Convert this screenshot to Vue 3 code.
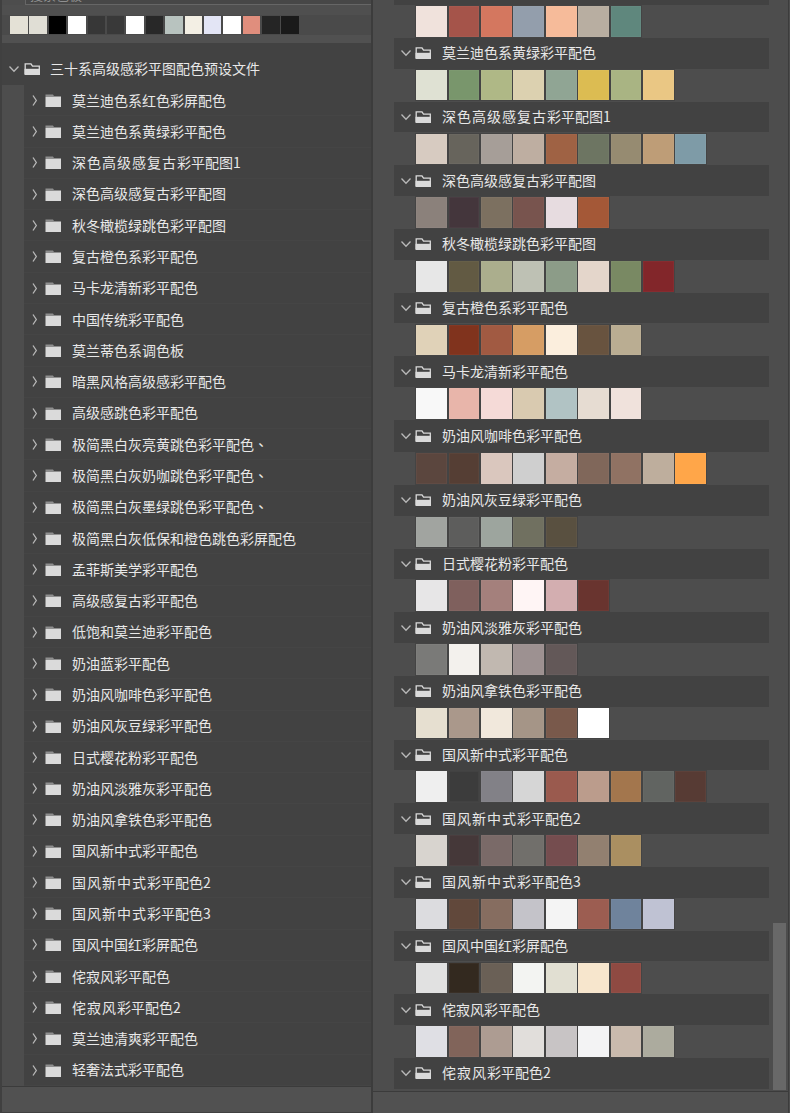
<script setup>
const recent = ['#e4e1d6', '#e0ded5', '#000000', '#ffffff', '#373737', '#393939', '#ffffff', '#282828', '#b8c3bf', '#f3efe4', '#e3e5f5', '#ffffff', '#e08e7d', '#252525', '#1a1a1a']

const folders = [
  '莫兰迪色系红色彩屏配色', '莫兰迪色系黄绿彩平配色', '深色高级感复古彩平配图1', '深色高级感复古彩平配图',
  '秋冬橄榄绿跳色彩平配图', '复古橙色系彩平配色', '马卡龙清新彩平配色', '中国传统彩平配色',
  '莫兰蒂色系调色板', '暗黑风格高级感彩平配色', '高级感跳色彩平配色', '极简黑白灰亮黄跳色彩平配色、',
  '极简黑白灰奶咖跳色彩平配色、', '极简黑白灰墨绿跳色彩平配色、', '极简黑白灰低保和橙色跳色彩屏配色',
  '孟菲斯美学彩平配色', '高级感复古彩平配色', '低饱和莫兰迪彩平配色', '奶油蓝彩平配色', '奶油风咖啡色彩平配色',
  '奶油风灰豆绿彩平配色', '日式樱花粉彩平配色', '奶油风淡雅灰彩平配色', '奶油风拿铁色彩平配色',
  '国风新中式彩平配色', '国风新中式彩平配色2', '国风新中式彩平配色3', '国风中国红彩屏配色',
  '侘寂风彩平配色', '侘寂风彩平配色2', '莫兰迪清爽彩平配色', '轻奢法式彩平配色',
]

const groups = [
  { name: '', colors: ['#f0e2dc', '#a5544a', '#d4775f', '#939eac', '#f6bb9a', '#b8aea1', '#5f877d'] },
  { name: '莫兰迪色系黄绿彩平配色', colors: ['#dfe1d3', '#79966c', '#afb886', '#dcd1b0', '#90a594', '#dcbc52', '#a9b483', '#eac784'] },
  { name: '深色高级感复古彩平配图1', colors: ['#d7cbc1', '#67645c', '#a69e98', '#beaea1', '#9f6244', '#6d7562', '#968b71', '#be9d77', '#7e9ba7'] },
  { name: '深色高级感复古彩平配图', colors: ['#8b817b', '#44363c', '#7c7060', '#78544e', '#e7dce0', '#a45837'] },
  { name: '秋冬橄榄绿跳色彩平配图', colors: ['#e7e7e7', '#625a43', '#abae8d', '#bec1b4', '#8c9c88', '#e4d6cb', '#798963', '#82262a'] },
  { name: '复古橙色系彩平配色', colors: ['#e0d2b8', '#80331d', '#a15a42', '#d69d64', '#fbeedd', '#68533f', '#baad92'] },
  { name: '马卡龙清新彩平配色', colors: ['#f8f8f8', '#e8b5aa', '#f5dad7', '#d9cab0', '#b1c3c4', '#e6dcd2', '#f0e2dc'] },
  { name: '奶油风咖啡色彩平配色', tall: true, colors: ['#5b463e', '#553e34', '#dac7be', '#cfcfcf', '#c5ada1', '#80675a', '#907263', '#beae9d', '#ffa649'] },
  { name: '奶油风灰豆绿彩平配色', colors: ['#a1a4a0', '#5d5d5c', '#9da59e', '#707060', '#595040'] },
  { name: '日式樱花粉彩平配色', colors: ['#e7e6e7', '#7f605d', '#a4807c', '#fff5f5', '#d3aeb0', '#69342f'] },
  { name: '奶油风淡雅灰彩平配色', colors: ['#7a7a78', '#f3f1ed', '#c1b8b0', '#9d9191', '#635858'] },
  { name: '奶油风拿铁色彩平配色', colors: ['#e6dfd0', '#aa988b', '#f1e8dc', '#a59587', '#79594b', '#ffffff'] },
  { name: '国风新中式彩平配色', colors: ['#efefef', '#3c3c3c', '#828187', '#d6d6d6', '#9a5a4e', '#bb9c8c', '#a3764d', '#616461', '#573b34'] },
  { name: '国风新中式彩平配色2', colors: ['#d8d4cf', '#453839', '#7a6a68', '#716f6b', '#754d4f', '#928070', '#aa8f61'] },
  { name: '国风新中式彩平配色3', colors: ['#dcdcdf', '#61483b', '#866d60', '#c4c3c9', '#f4f4f4', '#9c5d51', '#6f839c', '#bfc2d3'] },
  { name: '国风中国红彩屏配色', colors: ['#e1e1e1', '#33291f', '#6a6056', '#f3f4f2', '#e1dfd2', '#f7e6cd', '#8f4a42'] },
  { name: '侘寂风彩平配色', colors: ['#dfdfe4', '#81645a', '#ad9c92', '#e1dedb', '#c8c4c5', '#f3f3f4', '#c9baad', '#acab9e'] },
  { name: '侘寂风彩平配色2', colors: [] },
]

// Names that end in a digit have a slightly wider run before the last characters.
function parts(name) {
  const i = /\d$/.test(name) ? name.indexOf('彩') : 0
  const m = name.slice(i).match(/^(.*?)([\d、]?)$/)
  return [name.slice(0, i), m[1], m[2]]
}
</script>

<template>
  <div class="app">
    <section class="left">
      <div class="search"><div class="field"><span>搜索色板</span></div></div>
      <div class="recent"><i v-for="(c, i) in recent" :key="i" :style="{ background: c }"></i></div>
      <div class="root">
        <svg class="chev" width="12" height="12" viewBox="0 0 12 12"><path d="M1.500 3.500 6 8.300 10.500 3.500" /></svg>
        <svg class="open" width="17" height="14" viewBox="0 0 17 14"><path class="lid" d="M1.200 12V1.800H7L8.500 4.200H15.300V12" /><path class="body" d="M.5 6.800H16V13H.5Z" /></svg>
        <span class="label">三十系高级感彩平图配色预设文件</span>
      </div>
      <div class="tree">
        <div v-for="f in folders" :key="f" class="row">
          <svg class="side" width="8" height="14" viewBox="0 0 8 14"><path d="M2 1.500 5.300 6.500 2 11.500" /></svg>
          <svg class="closed" width="17" height="14" viewBox="0 0 17 14"><path class="tab" d="M.5 .5H8L9 2H.5Z" /><path class="body" d="M.5 2.500H16V13H.5Z" /></svg>
          <span class="label"><b>{{ parts(f)[0] }}</b>{{ parts(f)[1] }}<em>{{ parts(f)[2] }}</em></span>
        </div>
      </div>
      <div class="foot"></div>
    </section>
    <section class="right">
      <div class="view">
        <div class="groups">
          <div v-for="(g, i) in groups" :key="i" class="group">
            <div class="head" :class="{ tall: g.tall }">
              <svg class="chev" width="12" height="12" viewBox="0 0 12 12"><path d="M1.500 3.500 6 8.300 10.500 3.500" /></svg>
              <svg class="open" width="17" height="14" viewBox="0 0 17 14"><path class="lid" d="M1.200 12V1.800H7L8.500 4.200H15.300V12" /><path class="body" d="M.5 6.800H16V13H.5Z" /></svg>
              <span class="label"><b>{{ parts(g.name)[0] }}</b>{{ parts(g.name)[1] }}<em>{{ parts(g.name)[2] }}</em></span>
            </div>
            <div class="swatches"><i v-for="(c, k) in g.colors" :key="k" :style="{ background: c }"></i></div>
          </div>
        </div>
        <div class="track"><div class="thumb"></div></div>
      </div>
      <div class="foot"></div>
    </section>
  </div>
</template>

<style>
body { background: #4d4d4d; }
</style>

<style scoped>
* { box-sizing: border-box; }
.app {
  display: flex;
  width: 790px;
  height: 1113px;
  overflow: hidden;
  background: #4d4d4d;
  color: #e8e8e8;
  font: 14px/20px "Noto Sans CJK SC", sans-serif;
}
.left {
  width: 371px;
  display: flex;
  flex-direction: column;
  border-left: 2px solid #404040;
}
.search { height: 5px; padding-left: 23px; flex: none; }
.field {
  height: 5px;
  border-left: 1px solid #666;
  border-bottom: 1px solid #666;
  background: #474747;
  overflow: hidden;
}
.field span { display: block; margin: -15px 0 0 4px; color: #909090; font-size: 13px; }
.recent {
  height: 38px;
  flex: none;
  display: flex;
  gap: 1.900px;
  padding: 11px 0 0 8px;
  background: linear-gradient(#4f4f4f 10px, #4a4a4a 10px, #4a4a4a 30px, #515151 30px);
}
.recent i {
  width: 17.500px;
  height: 18px;
}
.root {
  height: 42px;
  flex: none;
  display: flex;
  align-items: center;
  padding: 11px 0 0 6px;
  background: #424242;
}
.tree {
  height: 1001px;
  flex: none;
  margin-left: 22px;
  background: #424242;
}
.row {
  height: 31.290px;
  display: flex;
  align-items: center;
  padding-left: 8px;
  border-bottom: 1px solid #454545;
}
.label { white-space: nowrap; height: 20px; margin-top: -1px; }
.root .label { margin-top: -4px; }
.head .label { margin-top: -2px; }
.label b { font-weight: 400; letter-spacing: 1px; }
.label em { font-style: normal; font-family: "Noto Sans CJK TC", sans-serif; }
svg { flex: none; fill: none; }
.chev path { stroke: #b9b9b9; stroke-width: 1.300; }
.side path { stroke: #b9b9b9; stroke-width: 1.300; }
.side { margin: 1.500px 5px 0 -1px; }
.closed { margin: 1.500px 10px 0 1px; }
.tab { fill: #8e8e8e; }
.body { fill: #dadada; }
.lid { stroke: #dadada; stroke-width: 1.300; }
.open { margin: 0 10px 0 4px; }
.root .chev, .root .open { margin-top: -2px; }
.root .open { margin-right: 9px; }
.left .foot { flex: 1; border-top: 1px solid #3b3b3b; border-bottom: 1px solid #404040; background: #515151; }
.right {
  width: 418px;
  display: flex;
  flex-direction: column;
  border-left: 2px solid #3c3c3c;
  border-right: 1px solid #3c3c3c;
}
.view { height: 1091px; flex: none; display: flex; overflow: hidden; padding-left: 21px; }
.groups { width: 375px; margin-top: -25.700px; }
.group { display: flex; flex-direction: column; }
.head {
  height: 30.700px;
  display: flex;
  align-items: center;
  padding-left: 6px;
  background: #424242;
}
.head .open { margin: 0 10px 0 3px; }
.head.tall { height: 31.700px; }
.swatches { height: 33px; display: flex; gap: 1.675px; padding: 1.200px 0 0 22.400px; }
.swatches i {
  width: 30.700px;
  height: 30.600px;
  flex: none;
  border: 1px solid rgba(255, 255, 255, .03);
  box-shadow: 0 0 0 1px #444;
}
.track { width: 19px; padding: 923px 2px 0 4px; }
.thumb { height: 167px; width: 13px; background: #686868; }
.right .foot { flex: 1; border-top: 1px solid #3b3b3b; background: #515151; }
</style>
